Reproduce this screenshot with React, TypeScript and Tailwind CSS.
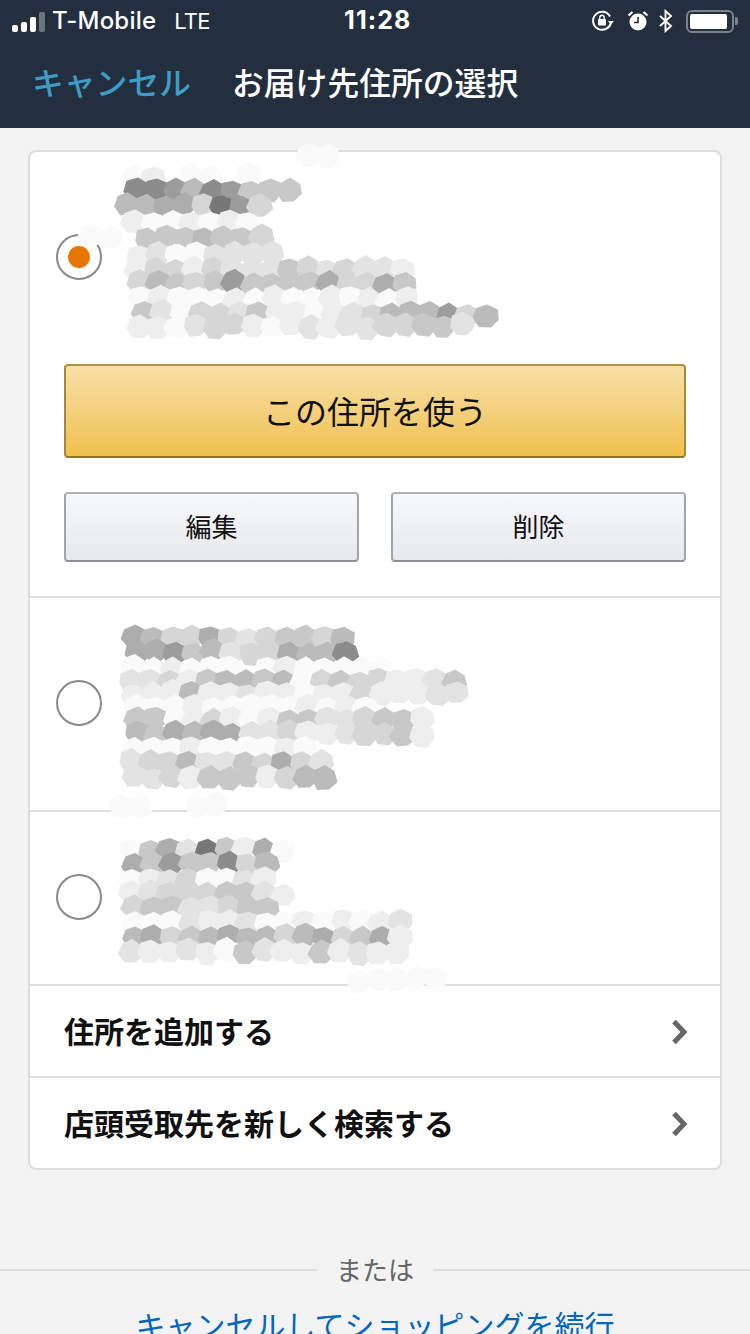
const jp = "font-['Inter','Noto_Sans_CJK_JP',sans-serif]"

const grays: Record<string, string> = {
    '0': '#777777',
    '1': '#8c8c8c',
    '2': '#9c9c9c',
    '3': '#adadad',
    '4': '#bbbbbb',
    '5': '#c8c8c8',
    '6': '#d6d6d6',
    '7': '#e3e3e3',
    '8': '#eeeeee',
    '9': '#fafafa',
}

type MosaicRow = [x: number, y: number, cells: string]

// the address text is scrubbed in the picture, this redraws the blocks
const Mosaic = ({rows, originY}: {rows: MosaicRow[]; originY: number}) => {
    let seed = 7 + originY
    const rnd = () => {
        seed = (seed * 9301 + 49297) % 233280
        return seed / 233280
    }
    const polys: {points: string; fill: string}[] = []
    rows.forEach(([x, y, cells]) => {
        cells.split('').forEach((c, i) => {
            if (c === '.') return
            const cx = x + i * 19 + 9
            const cy = y + rnd() * 4 - 2
            const points = [0, 1, 2, 3, 4, 5, 6]
                .map(k => {
                    const a = (k / 7) * Math.PI * 2 + 0.3
                    const rx = 11.5 + rnd() * 3
                    const ry = 10.5 + rnd() * 3
                    return `${(cx + Math.cos(a) * rx).toFixed(1)},${(cy + Math.sin(a) * ry).toFixed(1)}`
                })
                .join(' ')
            polys.push({points, fill: grays[c]})
        })
    })
    return (
        <svg className="absolute left-0 top-0 z-10 overflow-visible" width="1" height="1">
            <g transform={`translate(-30 ${-originY})`}>
                {polys.map((p, i) => (
                    <polygon key={i} points={p.points} fill={p.fill} />
                ))}
            </g>
        </svg>
    )
}

const mosaic1: MosaicRow[] = [
    [300, 156, '99'],
    [125, 176, '98.99.9'],
    [128, 191, '112412555'],
    [118, 206, '44336026'],
    [125, 223, '8998989'],
    [138, 238, '5554556'],
    [130, 255, '87997777'],
    [128, 270, '866867775676778'],
    [130, 284, '645652555536635'],
    [132, 299, '989998989989898'],
    [135, 314, '5796675889876444264'],
    [130, 326, '889766898787766557'],
    [82, 236, '99'],
]

const mosaic2: MosaicRow[] = [
    [125, 636, '346636765564'],
    [128, 651, '332547663441'],
    [125, 666, '998999.9899999'],
    [122, 679, '776854454965668875'],
    [125, 692, '888488788988688877'],
    [128, 705, '9998999998989'],
    [128, 718, '5598689855776558'],
    [128, 732, '4534337768876658'],
    [125, 746, '9998999989'],
    [122, 761, '76647756367'],
    [125, 775, '77685558644'],
    [112, 804, '99..99'],
]

const mosaic3: MosaicRow[] = [
    [122, 848, '953705839'],
    [125, 862, '35255164'],
    [122, 878, '98769978'],
    [122, 892, '876665578'],
    [125, 906, '65577655'],
    [125, 920, '999788799898987'],
    [125, 935, '436543446436538'],
    [122, 950, '788789578858788'],
    [350, 978, '99999'],
]

const Radio = ({checked}: {checked?: boolean}) => (
    <div className="flex items-center justify-center size-[46px] rounded-full border-2 border-[#888888] bg-white">
        {checked && <div className="size-[22px] rounded-full bg-[#e77600]" />}
    </div>
)

const LinkRow = ({label}: {label: string}) => (
    <div className="flex items-center justify-between h-[92px] pt-[2px] pl-[34px] pr-[32px] border-t-2 border-[#dddddd]">
        <span className="text-[30px] font-bold text-[#111111]">{label}</span>
        <svg width="17" height="26" viewBox="0 0 17 26" fill="none">
            <path d="M3 2.5 13 13 3 23.5" stroke="#666666" strokeWidth="5" />
        </svg>
    </div>
)

const StatusBar = () => (
    <div className="relative flex items-center h-[42px] pl-[12px] pr-[12px] text-white">
        <div className="flex items-end gap-[3px] h-[20px] mt-[1px]">
            <div className="w-[6px] h-[7px] rounded-[2px] bg-white" />
            <div className="w-[6px] h-[10px] rounded-[2px] bg-white" />
            <div className="w-[6px] h-[15px] rounded-[2px] bg-white" />
            <div className="w-[6px] h-[20px] rounded-[2px] bg-[#6d747d]" />
        </div>
        <span className="ml-[7px] text-[24px] font-medium tracking-[0.2px]">T-Mobile</span>
        <span className="ml-[18px] text-[22px] tracking-[-0.8px]">LTE</span>
        <span className="absolute left-[344px] text-[25px] font-bold tracking-[1.1px]">11:28</span>
        <div className="ml-auto flex items-center">
            <svg width="24" height="22" viewBox="0 0 24 22" fill="none">
                <path d="M19 6.5A9 9 0 1 0 20 12" stroke="white" strokeWidth="2" />
                <path d="M17 11h6l-3 3.5z" fill="white" />
                <rect x="7" y="9" width="8" height="6.5" rx="1" fill="white" />
                <path d="M8.8 9V7.4a2.2 2.2 0 0 1 4.4 0V9" stroke="white" strokeWidth="1.4" />
            </svg>
            <svg className="ml-[12px]" width="22" height="22" viewBox="0 0 22 22" fill="none">
                <circle cx="11" cy="12" r="8.5" fill="white" />
                <path d="M11 7v5.5H7" stroke="#232f3e" strokeWidth="1.6" />
                <path d="M1.5 5.5 5.5 2M20.5 5.5 16.5 2" stroke="white" strokeWidth="2.2" />
            </svg>
            <svg className="ml-[9px]" width="16" height="24" viewBox="0 0 16 24" fill="none">
                <path d="M2 7l11 10-5.5 5V2L13 7 2 17" stroke="white" strokeWidth="1.9" />
            </svg>
            <div className="ml-[12px] flex items-center w-[48px] h-[23px] rounded-[6px] border-2 border-[#7b828b] p-[2px]">
                <div className="w-[37px] h-full rounded-[2px] bg-white" />
            </div>
            <div className="ml-[1px] w-[3px] h-[8px] rounded-r-[2px] bg-[#7b828b]" />
        </div>
    </div>
)

export default function App() {
    return (
        <div className={`h-[1334px] overflow-hidden bg-[#f3f3f3] ${jp}`}>
            <div className="h-[128px] bg-[#232f3e]">
                <StatusBar />
                <div className="flex items-center h-[84px] pl-[32px]">
                    <span className="text-[31.8px] font-medium text-[#3d9dc6]">キャンセル</span>
                    <span className="ml-[41px] text-[31.8px] font-medium text-white">お届け先住所の選択</span>
                </div>
            </div>

            <div className="mx-[28px] mt-[22px] rounded-[8px] border-2 border-[#dddddd] bg-white">
                <div className="relative">
                    <div className="flex items-center h-[210px] pl-[26px]">
                        <Radio checked />
                    </div>
                    <Mosaic rows={mosaic1} originY={152} />
                    <div className="mt-[2px] mx-[34px] flex items-center justify-center h-[94px] pt-[3px] rounded-[4px] border-2 border-t-[#b0913f] border-x-[#a5883a] border-b-[#8f7430] bg-gradient-to-b from-[#f7dfa5] to-[#f0c14b] text-[32px] text-[#111111]">
                        この住所を使う
                    </div>
                    <div className="flex gap-[32px] mx-[34px] mt-[34px] pb-[34px]">
                        <div className="flex flex-1 items-center justify-center h-[70px] rounded-[4px] border-2 border-t-[#adb1b8] border-x-[#a2a6ac] border-b-[#8d9096] bg-gradient-to-b from-[#f7f8fa] to-[#e7e9ec] text-[26px] text-[#111111]">
                            編集
                        </div>
                        <div className="flex flex-1 items-center justify-center h-[70px] rounded-[4px] border-2 border-t-[#adb1b8] border-x-[#a2a6ac] border-b-[#8d9096] bg-gradient-to-b from-[#f7f8fa] to-[#e7e9ec] text-[26px] text-[#111111]">
                            削除
                        </div>
                    </div>
                </div>
                <div className="relative flex items-center h-[214px] pb-[2px] pl-[26px] border-t-2 border-[#dddddd]">
                    <Radio />
                    <Mosaic rows={mosaic2} originY={596} />
                </div>
                <div className="relative flex items-center h-[174px] pb-[2px] pl-[26px] border-t-2 border-[#dddddd]">
                    <Radio />
                    <Mosaic rows={mosaic3} originY={810} />
                </div>
                <LinkRow label="住所を追加する" />
                <LinkRow label="店頭受取先を新しく検索する" />
            </div>

            <div className="flex items-center gap-[19px] mt-[86px] h-[28px]">
                <div className="flex-1 h-[2px] bg-[#dddddd]" />
                <span className="text-[26px] text-[#666666]">または</span>
                <div className="flex-1 h-[2px] bg-[#dddddd]" />
            </div>
            <div className="mt-[22px] text-center text-[30px] leading-[40px] text-[#0066c0]">
                キャンセルしてショッピングを続行
            </div>
        </div>
    )
}
